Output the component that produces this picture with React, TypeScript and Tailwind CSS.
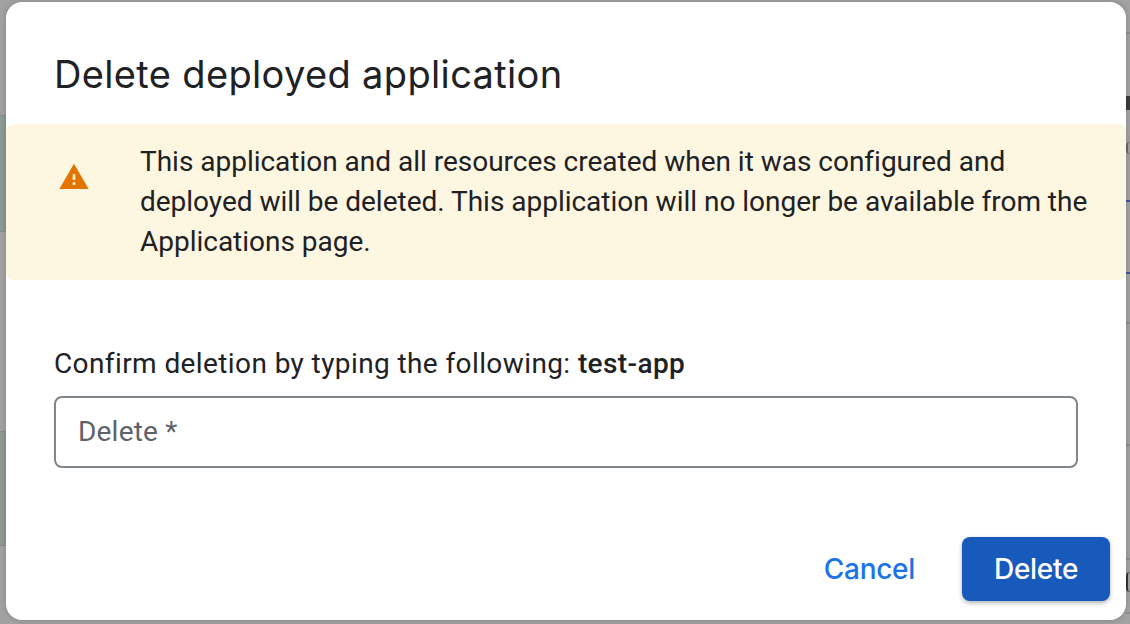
export default function App() {
  return (
    <div className="flex h-[624px] w-[1130px] overflow-hidden bg-[#a2a2a2] font-['Roboto',sans-serif] text-[#202124]">
      {/* page behind the dialog, visible only along its left edge */}
      <div className="flex w-[6px] shrink-0 flex-col">
        <div className="mt-[115px] h-[117px] border-y border-[#8a8a8a] bg-[#8f9a93]" />
        <div className="mt-[199px] h-[115px] border-y border-[#8a8a8a] bg-[#8f9a93]" />
      </div>
      <div className="z-10 mt-[2px] flex h-[618px] w-[1120px] shrink-0 flex-col rounded-[16px] bg-white shadow-[0_0_6px_rgba(0,0,0,0.18)]">
        <h1 className="h-[122px] pl-[48px] pt-[48px] font-['Inter',sans-serif] text-[38px] font-normal leading-[48px] tracking-[0.35px]">Delete deployed application</h1>
        <div className="flex h-[156px] rounded-[8px] bg-[#fdf6e0]">
          <div className="flex w-[134px] shrink-0 pl-[52px] pt-[37px]">
            <svg width="32" height="32" viewBox="0 0 24 24" fill="#e37400"><path d="M1 21h22L12 2 1 21zm12-3h-2v-2h2v2zm0-4h-2v-4h2v4z" /></svg>
          </div>
          <p className="pr-[30px] pt-[18px] text-[28px] leading-[40px] tracking-[-0.015px]">This application and all resources created when it was configured and deployed will be deleted. This application will no longer be available from the Applications page.</p>
        </div>
        <p className="pl-[48px] pt-[64px] text-[28px] leading-[40px] tracking-[0.4px]">Confirm deletion by typing the following: <b className="font-medium">test-app</b></p>
        <div className="mx-[48px] mt-[12px] flex h-[72px] w-[1024px] items-center rounded-[8px] border-2 border-[#80868b] pl-[22px] text-[28px] tracking-[0.2px] text-[#5f6368]">Delete *</div>
        <div className="mt-[69px] flex items-center justify-end pr-[16px]">
          <span className="mr-[47px] font-['Inter',sans-serif] text-[28px] font-medium leading-[36px] tracking-[-0.3px] text-[#1a73e8]">Cancel</span>
          <button className="h-[64px] w-[148px] rounded-[8px] bg-[#185abc] font-['Inter',sans-serif] text-[28px] font-medium tracking-[-0.3px] text-white shadow-[0_2px_4px_rgba(60,64,67,0.4)]">Delete</button>
        </div>
      </div>
      {/* page behind the dialog, visible only along its right edge */}
      <div className="flex w-[4px] shrink-0 flex-col">
        <div className="mt-[32px] h-[2px] bg-[#8f8f8f]" />
        <div className="mt-[62px] h-[14px] bg-[#3c3c3c]" />
        <div className="mt-[32px] h-[12px] rounded-l-full border-l-2 border-[#666666]" />
        <div className="mt-[46px] h-[2px] bg-[#3f5a9a]" />
        <div className="mt-[70px] h-[2px] bg-[#3f5a9a]" />
        <div className="mt-[48px] h-[2px] bg-[#8f8f8f]" />
        <div className="mt-[120px] h-[2px] bg-[#8f8f8f]" />
        <div className="mt-[112px] h-[2px] bg-[#8f8f8f]" />
        <div className="mt-[12px] h-[20px] rounded-l-full border-l-2 border-[#333333]" />
        <div className="mt-[20px] h-[2px] bg-[#8f8f8f]" />
      </div>
    </div>
  );
}
